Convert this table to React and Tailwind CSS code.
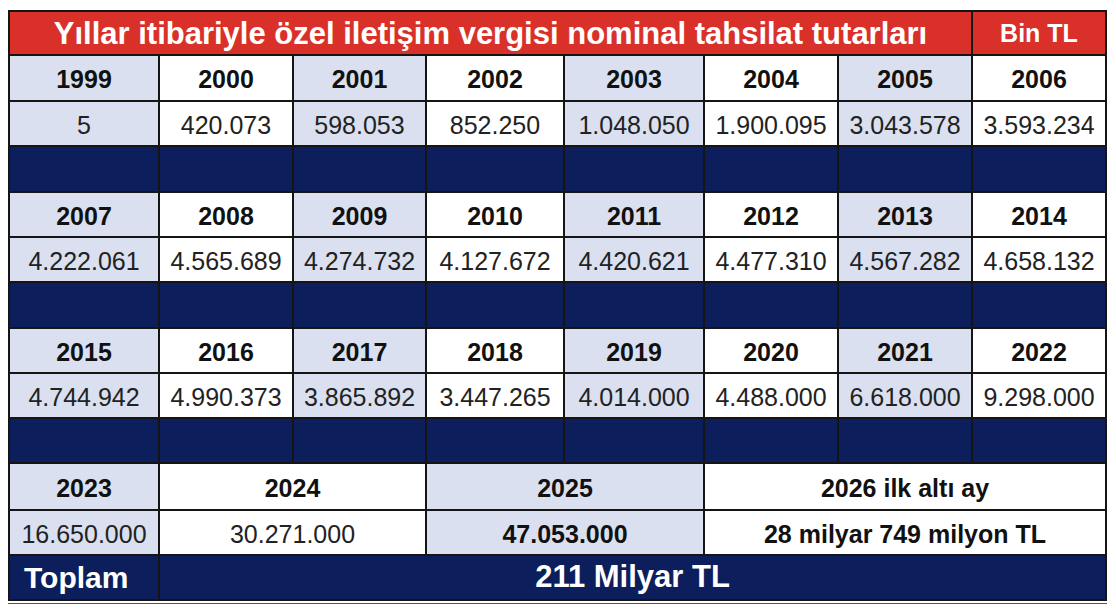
import React from "react";

const L = "bg-[#dae0ef]";
const W = "bg-white";
const N = "bg-[#0c1f5c]";

const rows = [
  {
    years: ["1999", "2000", "2001", "2002", "2003", "2004", "2005", "2006"],
    vals: ["5", "420.073", "598.053", "852.250", "1.048.050", "1.900.095", "3.043.578", "3.593.234"],
  },
  {
    years: ["2007", "2008", "2009", "2010", "2011", "2012", "2013", "2014"],
    vals: ["4.222.061", "4.565.689", "4.274.732", "4.127.672", "4.420.621", "4.477.310", "4.567.282", "4.658.132"],
  },
  {
    years: ["2015", "2016", "2017", "2018", "2019", "2020", "2021", "2022"],
    vals: ["4.744.942", "4.990.373", "3.865.892", "3.447.265", "4.014.000", "4.488.000", "6.618.000", "9.298.000"],
  },
];

const cell = "flex items-center justify-center whitespace-nowrap pt-[4px]";

export default function App() {
  return (
    <div
      className="w-[1116px] h-[612px] bg-white pt-[10px] pl-[8px]"
      style={{ fontFamily: '"Liberation Sans", Arial, sans-serif' }}
    >
      <div className="w-fit border-b-[1px] border-[#555] pb-[2px]">
        <div className="grid w-fit grid-cols-[148px_132px_131px_136px_138px_132px_132px_132px] grid-rows-[42px_44px_43px_44px_43px_43px_44px_43px_43px_43px_45px_43px_43px] gap-[2px] bg-[#151515] p-[2px]">
          <div className="flex items-center justify-center whitespace-nowrap pt-[2px] col-span-7 bg-[#d9312a] text-[31px] font-bold text-white">
            Yıllar itibariyle özel iletişim vergisi nominal tahsilat tutarları
          </div>
          <div className="flex items-center justify-center whitespace-nowrap pt-[2px] bg-[#d9312a] text-[25px] font-bold text-white">Bin TL</div>

          {rows.map((r, ri) => (
            <React.Fragment key={ri}>
              {r.years.map((y, i) => (
                <div key={"y" + i} className={`${cell} ${i % 2 === 0 ? L : W} text-[25px] font-bold text-[#111]`}>
                  {y}
                </div>
              ))}
              {r.vals.map((v, i) => (
                <div key={"v" + i} className={`${cell} ${i % 2 === 0 ? L : W} text-[25px] text-[#222]`}>
                  {v}
                </div>
              ))}
              {r.years.map((_, i) => (
                <div key={"n" + i} className={N} />
              ))}
            </React.Fragment>
          ))}

          <div className={`${cell} ${L} text-[25px] font-bold text-[#111]`}>2023</div>
          <div className={`${cell} ${W} col-span-2 text-[25px] font-bold text-[#111]`}>2024</div>
          <div className={`${cell} ${L} col-span-2 text-[25px] font-bold text-[#111]`}>2025</div>
          <div className={`${cell} ${W} col-span-3 text-[25px] font-bold text-[#111]`}>2026 ilk altı ay</div>

          <div className={`${cell} ${L} text-[25px] text-[#222]`}>16.650.000</div>
          <div className={`${cell} ${W} col-span-2 text-[25px] text-[#222]`}>30.271.000</div>
          <div className={`${cell} ${L} col-span-2 text-[25px] font-bold text-[#111]`}>47.053.000</div>
          <div className={`${cell} ${W} col-span-3 text-[25px] font-bold text-[#111]`}>28 milyar 749 milyon TL</div>

          <div className={`flex items-center ${N} pl-[14px] text-[30px] font-bold text-white`}>Toplam</div>
          <div className={`flex items-center justify-center ${N} col-span-7 text-[31px] font-bold text-white`}>211 Milyar TL</div>
        </div>
      </div>
    </div>
  );
}
